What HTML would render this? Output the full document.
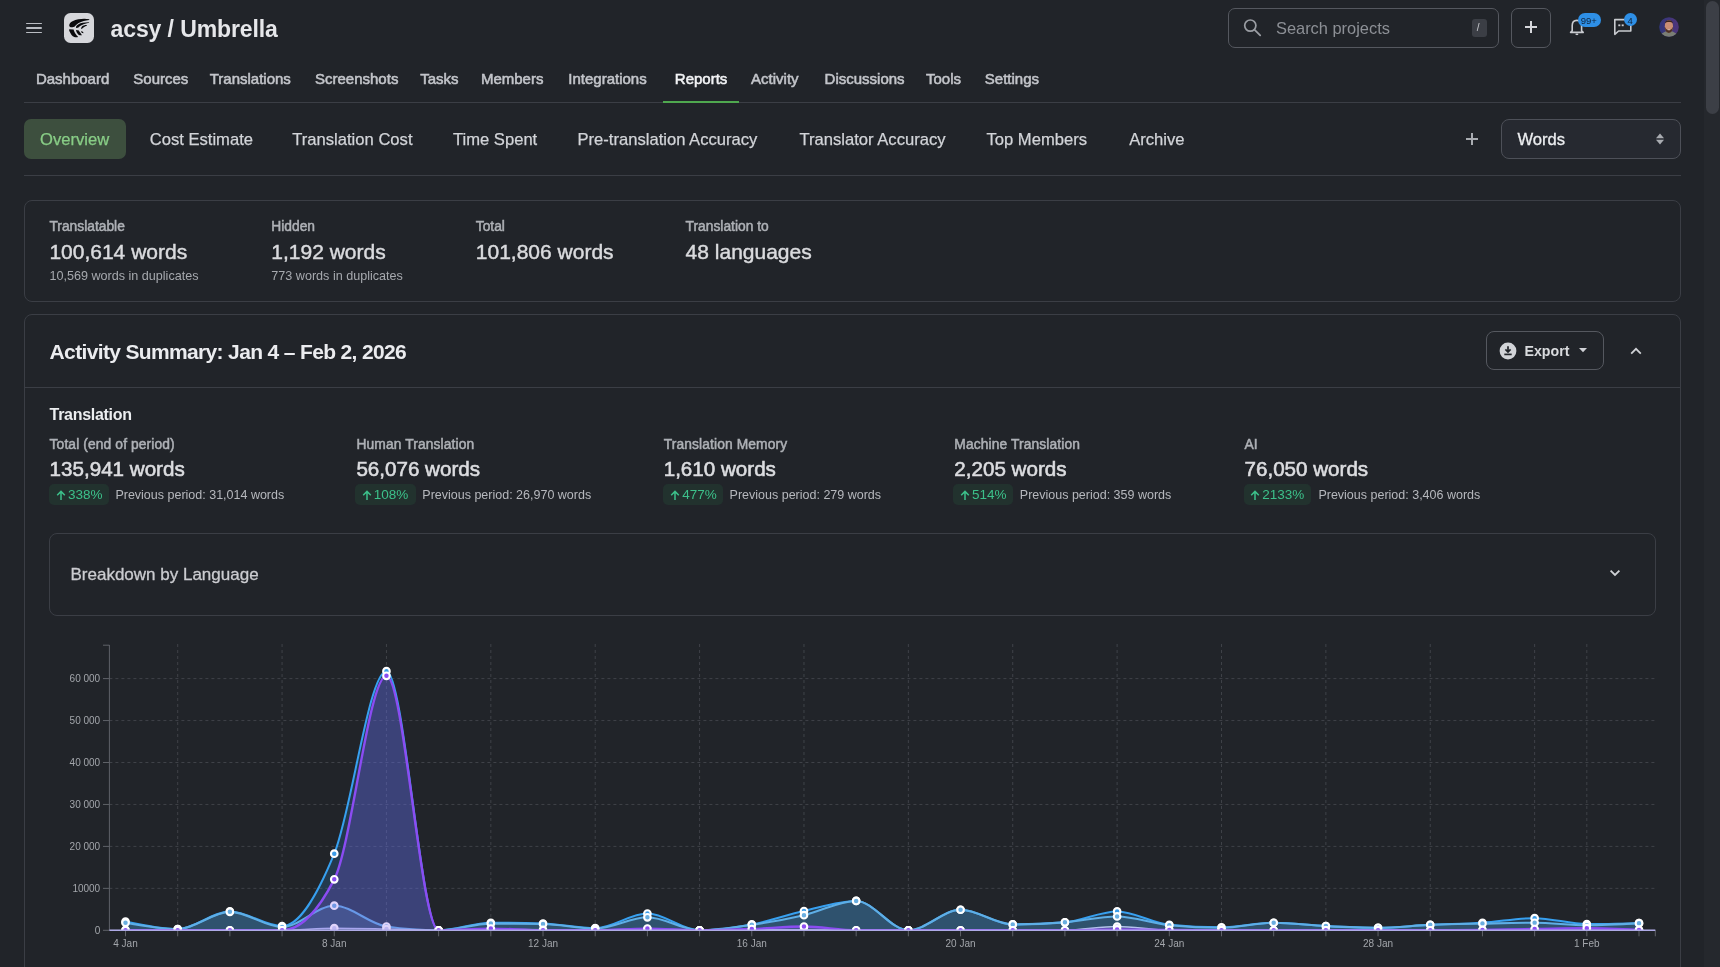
<!DOCTYPE html><html><head><meta charset="utf-8"><style>
html,body{margin:0;padding:0;width:1720px;height:967px;overflow:hidden;background:#212429;font-family:"Liberation Sans", sans-serif}
.t{position:absolute;white-space:nowrap;line-height:1}
.b{position:absolute}
</style></head><body><div id="root" style="position:absolute;left:0;top:0;width:1720px;height:967px;will-change:transform">
<div class="b" style="left:26px;top:22.5px;width:16px;height:1.8px;background:#b9bcc2;border-radius:1px"></div><div class="b" style="left:26px;top:27px;width:16px;height:1.8px;background:#b9bcc2;border-radius:1px"></div><div class="b" style="left:26px;top:31.5px;width:16px;height:1.8px;background:#b9bcc2;border-radius:1px"></div><div class="b" style="left:64px;top:13px;width:30px;height:30px;border-radius:6.5px;background:#d6d7db;overflow:hidden">
<svg width="30" height="30" viewBox="0 0 30 30" style="position:absolute;left:0;top:0"><g fill="#0b0b0d">
<path d="M25.4 6.3 C21 5.2 14 5.6 8.5 8.2 C6.6 9.2 5.2 10.8 5.2 12.4 C5.2 13.6 6.6 14.4 8.5 14.3 C10 14.2 11 13.6 11.4 12.8 C13 10.5 17 7.8 25.1 6.9 Z"/>
<path d="M25.1 9.3 C21 9.2 16.5 10 14.9 11 C13.5 11.8 12.4 12.8 12.1 13.6 L12.1 14.9 C13 15 14 14.8 14.5 14.5 C16 13 19 10.8 25.1 9.8 Z"/>
<path d="M23 12.1 C21 12 19 12.7 18 13.5 C17.4 14.2 17.1 15 17.2 15.9 L17.7 15.9 C18.5 15.3 19.2 14.6 19.8 14.2 C20.8 13.4 22 12.8 23 12.5 Z"/>
<path d="M5.2 16.3 L9.6 16.6 C10 18 10.8 20.5 12.8 22.6 C13.3 23.2 13.8 23.7 14.2 24 C12.5 24.3 11.4 24.3 10.3 24 C8.2 23.2 6.8 21.2 5.2 17.7 Z"/>
<path d="M12.1 17 L14.9 17.5 C15.3 18.4 15.7 19.2 16.3 19.8 C16.9 20.8 17.4 21.6 18 22.3 C16.8 22.4 15.8 22.3 14.9 21.9 C13.7 21 12.8 20 12.1 17.8 Z"/>
<path d="M17.2 18 C18 18.2 18.7 18.6 19.1 19.1 C19.3 19.5 19.4 19.9 19.4 20.2 C18.6 20.2 18 20 17.7 19.8 C17.4 19.3 17.2 18.6 17.2 18 Z"/>
</g></svg></div><div class="t" style="left:110.5px;top:18.3px;font-size:23px;color:#e6e7ea;font-weight:700;letter-spacing:-0.1px;">acsy / Umbrella</div><div class="b" style="left:1228px;top:8px;width:271px;height:40px;border:1px solid #55585f;border-radius:7px;box-sizing:border-box"></div><svg class="b" style="left:1243px;top:18px" width="20" height="20" viewBox="0 0 20 20"><circle cx="7.3" cy="7.6" r="5.6" stroke="#9a9da3" stroke-width="1.7" fill="none"/><path d="M11.4 11.7 L17.2 17.4" stroke="#9a9da3" stroke-width="1.8" stroke-linecap="round"/></svg><div class="t" style="left:1276.0px;top:20.3px;font-size:16.4px;color:#8d9096;font-weight:400;">Search projects</div><div class="b" style="left:1471.5px;top:19px;width:15.5px;height:18px;background:#3b3e45;border-radius:3px"></div><div class="t" style="left:1476.8px;top:23.3px;font-size:10px;color:#c8cace;font-weight:400;">/</div><div class="b" style="left:1511px;top:8px;width:40px;height:40px;border:1px solid #55585f;border-radius:7px;box-sizing:border-box"></div><div class="b" style="left:1524.8px;top:26.1px;width:12.4px;height:1.9px;background:#d6d7db"></div><div class="b" style="left:1530.1px;top:20.9px;width:1.9px;height:12.3px;background:#d6d7db"></div><svg class="b" style="left:1568px;top:16px" width="18" height="20" viewBox="0 0 18 20"><path d="M4.2 14.8 L4.2 9.6 C4.2 6.3 6.3 4.4 8.9 4.4 C11.5 4.4 13.6 6.3 13.6 9.6 L13.6 14.8 L15.2 16.4 L2.6 16.4 Z" stroke="#c9cbd0" stroke-width="1.6" fill="none" stroke-linejoin="round"/><path d="M7.6 18.3 L10.2 18.3" stroke="#c9cbd0" stroke-width="1.5"/></svg><div class="b" style="left:1577.5px;top:13px;width:23.5px;height:14.3px;background:#2e8fe6;border-radius:8px"></div><div class="t" style="left:1580.8px;top:16.0px;font-size:9.5px;color:#10243c;font-weight:400;">99+</div><svg class="b" style="left:1613px;top:17px" width="20" height="20" viewBox="0 0 20 20"><path d="M1.8 2.6 L17.8 2.6 L17.8 14.0 L5.6 14.0 L1.8 17.3 Z" stroke="#c9cbd0" stroke-width="1.6" fill="none" stroke-linejoin="round"/><rect x="5.3" y="7.4" width="2" height="1.8" fill="#c9cbd0"/><rect x="8.7" y="7.4" width="2" height="1.8" fill="#c9cbd0"/></svg><div class="b" style="left:1623.8px;top:12.7px;width:13.2px;height:13.3px;background:#2e8fe6;border-radius:50%"></div><div class="t" style="left:1627.6px;top:15.6px;font-size:9.5px;color:#10243c;font-weight:400;">4</div><svg class="b" style="left:1659px;top:17px" width="20" height="20" viewBox="0 0 20 20"><defs><clipPath id="av"><circle cx="10" cy="10" r="9.8"/></clipPath><linearGradient id="avg" x1="0" x2="1" y1="0" y2="0"><stop offset="0" stop-color="#30367a"/><stop offset="1" stop-color="#50357a"/></linearGradient></defs><g clip-path="url(#av)"><rect width="20" height="20" fill="url(#avg)"/><ellipse cx="10" cy="21.5" rx="9.5" ry="7.5" fill="#7a7e74"/><ellipse cx="9.9" cy="9.3" rx="4.1" ry="6.4" fill="#c98e74"/><path d="M5.9 9.8 C6 14.2 8 16 9.9 16 C11.8 16 13.8 14.2 13.9 9.8 C13 12.2 12 12.8 9.9 12.8 C7.8 12.8 6.8 12.2 5.9 9.8 Z" fill="#4d3024"/><path d="M8.2 12.3 L11.6 12.3 L11 13.2 L8.8 13.2 Z" fill="#e0c0b0"/><path d="M5.9 6.2 C5.9 2.3 13.9 2.3 13.9 6.2 C12.5 4.6 7.3 4.6 5.9 6.2 Z" fill="#3a241c"/></g></svg><div class="t" style="left:35.9px;top:71.0px;font-size:15px;color:#c3c5ca;font-weight:400;-webkit-text-stroke:0.55px #c3c5ca;">Dashboard</div><div class="t" style="left:133.3px;top:71.0px;font-size:15px;color:#c3c5ca;font-weight:400;-webkit-text-stroke:0.55px #c3c5ca;">Sources</div><div class="t" style="left:209.7px;top:71.0px;font-size:15px;color:#c3c5ca;font-weight:400;-webkit-text-stroke:0.55px #c3c5ca;">Translations</div><div class="t" style="left:315.0px;top:71.0px;font-size:15px;color:#c3c5ca;font-weight:400;-webkit-text-stroke:0.55px #c3c5ca;">Screenshots</div><div class="t" style="left:420.2px;top:71.0px;font-size:15px;color:#c3c5ca;font-weight:400;-webkit-text-stroke:0.55px #c3c5ca;">Tasks</div><div class="t" style="left:480.9px;top:71.0px;font-size:15px;color:#c3c5ca;font-weight:400;-webkit-text-stroke:0.55px #c3c5ca;">Members</div><div class="t" style="left:568.3px;top:71.0px;font-size:15px;color:#c3c5ca;font-weight:400;-webkit-text-stroke:0.55px #c3c5ca;">Integrations</div><div class="t" style="left:674.8px;top:71.0px;font-size:15px;color:#f2f3f5;font-weight:400;-webkit-text-stroke:0.55px #f2f3f5;">Reports</div><div class="t" style="left:751.1px;top:71.0px;font-size:15px;color:#c3c5ca;font-weight:400;-webkit-text-stroke:0.55px #c3c5ca;">Activity</div><div class="t" style="left:824.6px;top:71.0px;font-size:15px;color:#c3c5ca;font-weight:400;-webkit-text-stroke:0.55px #c3c5ca;">Discussions</div><div class="t" style="left:926.0px;top:71.0px;font-size:15px;color:#c3c5ca;font-weight:400;-webkit-text-stroke:0.55px #c3c5ca;">Tools</div><div class="t" style="left:984.8px;top:71.0px;font-size:15px;color:#c3c5ca;font-weight:400;-webkit-text-stroke:0.55px #c3c5ca;">Settings</div><div class="b" style="left:24px;top:102px;width:1657px;height:1px;background:#3b3e45"></div><div class="b" style="left:663.3px;top:101px;width:75.7px;height:2.2px;background:#4fa84f"></div><div class="b" style="left:24px;top:119px;width:102px;height:40px;background:#3d4f3e;border-radius:7px"></div><div class="t" style="left:40.1px;top:131.8px;font-size:16.6px;color:#88cd86;font-weight:400;-webkit-text-stroke:0.25px #88cd86;">Overview</div><div class="t" style="left:149.7px;top:131.8px;font-size:16.6px;color:#d2d4d8;font-weight:400;-webkit-text-stroke:0.25px #d2d4d8;">Cost Estimate</div><div class="t" style="left:292.3px;top:131.8px;font-size:16.6px;color:#d2d4d8;font-weight:400;-webkit-text-stroke:0.25px #d2d4d8;">Translation Cost</div><div class="t" style="left:453.0px;top:131.8px;font-size:16.6px;color:#d2d4d8;font-weight:400;-webkit-text-stroke:0.25px #d2d4d8;">Time Spent</div><div class="t" style="left:577.5px;top:131.8px;font-size:16.6px;color:#d2d4d8;font-weight:400;-webkit-text-stroke:0.25px #d2d4d8;">Pre-translation Accuracy</div><div class="t" style="left:799.5px;top:131.8px;font-size:16.6px;color:#d2d4d8;font-weight:400;-webkit-text-stroke:0.25px #d2d4d8;">Translator Accuracy</div><div class="t" style="left:986.5px;top:131.8px;font-size:16.6px;color:#d2d4d8;font-weight:400;-webkit-text-stroke:0.25px #d2d4d8;">Top Members</div><div class="t" style="left:1129.2px;top:131.8px;font-size:16.6px;color:#d2d4d8;font-weight:400;-webkit-text-stroke:0.25px #d2d4d8;">Archive</div><div class="b" style="left:1465.7px;top:138.1px;width:12.6px;height:1.7px;background:#a9acb1"></div><div class="b" style="left:1471.15px;top:133px;width:1.7px;height:12px;background:#a9acb1"></div><div class="b" style="left:1501px;top:119px;width:180px;height:40px;border:1px solid #4d5058;border-radius:8px;box-sizing:border-box;background:#262930"></div><div class="t" style="left:1517.5px;top:131.8px;font-size:16.6px;color:#eceef0;font-weight:400;-webkit-text-stroke:0.3px #eceef0;">Words</div><svg class="b" style="left:1655px;top:132px" width="10" height="14" viewBox="0 0 10 14"><path d="M1 6.2 L5 1.5 L9 6.2 Z" fill="#a9acb1"/><path d="M1 7.8 L5 12.5 L9 7.8 Z" fill="#a9acb1"/></svg><div class="b" style="left:24px;top:175px;width:1657px;height:1px;background:#3b3e45"></div><div class="b" style="left:24px;top:200px;width:1657px;height:102px;border:1px solid #3b3e45;border-radius:8px;box-sizing:border-box"></div><div class="t" style="left:49.4px;top:220.3px;font-size:13.8px;color:#aeb1b6;font-weight:400;-webkit-text-stroke:0.5px #aeb1b6;">Translatable</div><div class="t" style="left:49.4px;top:241.2px;font-size:21px;color:#dadbde;font-weight:400;-webkit-text-stroke:0.45px #dadbde;">100,614 words</div><div class="t" style="left:49.4px;top:270.3px;font-size:12.6px;color:#a6a9ae;font-weight:400;">10,569 words in duplicates</div><div class="t" style="left:271.3px;top:220.3px;font-size:13.8px;color:#aeb1b6;font-weight:400;-webkit-text-stroke:0.5px #aeb1b6;">Hidden</div><div class="t" style="left:271.3px;top:241.2px;font-size:21px;color:#dadbde;font-weight:400;-webkit-text-stroke:0.45px #dadbde;">1,192 words</div><div class="t" style="left:271.3px;top:270.3px;font-size:12.6px;color:#a6a9ae;font-weight:400;">773 words in duplicates</div><div class="t" style="left:475.8px;top:220.3px;font-size:13.8px;color:#aeb1b6;font-weight:400;-webkit-text-stroke:0.5px #aeb1b6;">Total</div><div class="t" style="left:475.8px;top:241.2px;font-size:21px;color:#dadbde;font-weight:400;-webkit-text-stroke:0.45px #dadbde;">101,806 words</div><div class="t" style="left:685.6px;top:220.3px;font-size:13.8px;color:#aeb1b6;font-weight:400;-webkit-text-stroke:0.5px #aeb1b6;">Translation to</div><div class="t" style="left:685.6px;top:241.2px;font-size:21px;color:#dadbde;font-weight:400;-webkit-text-stroke:0.45px #dadbde;">48 languages</div><div class="b" style="left:24px;top:314px;width:1657px;height:700px;border:1px solid #3b3e45;border-radius:8px;box-sizing:border-box"></div><div class="t" style="left:49.6px;top:340.6px;font-size:21px;color:#ebecef;font-weight:700;letter-spacing:-0.65px;">Activity Summary: Jan 4 – Feb 2, 2026</div><div class="b" style="left:1486px;top:331px;width:118px;height:39px;border:1px solid #55585f;border-radius:8px;box-sizing:border-box"></div><svg class="b" style="left:1499px;top:342px" width="18" height="18" viewBox="0 0 18 18"><circle cx="9" cy="9" r="8.4" fill="#d2d4d8"/><path d="M9 4.2 L9 9.8 M6.4 7.4 L9 10 L11.6 7.4" stroke="#212429" stroke-width="1.7" fill="none"/><path d="M5.3 12.4 L12.7 12.4" stroke="#212429" stroke-width="1.7"/></svg><div class="t" style="left:1524.5px;top:343.8px;font-size:14.2px;color:#d9dbde;font-weight:700;">Export</div><svg class="b" style="left:1578px;top:347px" width="10" height="6" viewBox="0 0 10 6"><path d="M1 1 L9 1 L5 5.2 Z" fill="#d0d2d6"/></svg><svg class="b" style="left:1629px;top:346px" width="14" height="10" viewBox="0 0 14 10"><path d="M2.2 7.6 L7 2.8 L11.8 7.6" stroke="#d0d2d6" stroke-width="1.8" fill="none"/></svg><div class="b" style="left:24px;top:387px;width:1657px;height:1px;background:#3b3e45"></div><div class="t" style="left:49.6px;top:406.6px;font-size:16px;color:#eceef0;font-weight:700;letter-spacing:-0.3px;">Translation</div><div class="t" style="left:49.6px;top:437.7px;font-size:13.8px;color:#aeb1b6;font-weight:400;letter-spacing:0.12px;-webkit-text-stroke:0.5px #aeb1b6;">Total (end of period)</div><div class="t" style="left:49.6px;top:458.5px;font-size:20.6px;color:#dcdde0;font-weight:400;-webkit-text-stroke:0.6px #dcdde0;">135,941 words</div><div class="b" style="left:49.1px;top:484.3px;width:59.800000000000004px;height:20.5px;background:#22322e;border-radius:5px"></div><svg class="b" style="left:55.6px;top:490px" width="10" height="11" viewBox="0 0 10 11"><path d="M5 10 L5 1.6 M1.2 5.2 L5 1.4 L8.8 5.2" stroke="#3cc08a" stroke-width="1.5" fill="none"/></svg><div class="t" style="left:67.9px;top:488.4px;font-size:13.5px;color:#3cc08a;font-weight:400;">338%</div><div class="t" style="left:115.4px;top:489.2px;font-size:12.5px;color:#b6b8bd;font-weight:400;">Previous period: 31,014 words</div><div class="t" style="left:356.4px;top:437.7px;font-size:13.8px;color:#aeb1b6;font-weight:400;letter-spacing:0.12px;-webkit-text-stroke:0.5px #aeb1b6;">Human Translation</div><div class="t" style="left:356.4px;top:458.5px;font-size:20.6px;color:#dcdde0;font-weight:400;-webkit-text-stroke:0.6px #dcdde0;">56,076 words</div><div class="b" style="left:355px;top:484.3px;width:60.69999999999999px;height:20.5px;background:#22322e;border-radius:5px"></div><svg class="b" style="left:361.5px;top:490px" width="10" height="11" viewBox="0 0 10 11"><path d="M5 10 L5 1.6 M1.2 5.2 L5 1.4 L8.8 5.2" stroke="#3cc08a" stroke-width="1.5" fill="none"/></svg><div class="t" style="left:373.8px;top:488.4px;font-size:13.5px;color:#3cc08a;font-weight:400;">108%</div><div class="t" style="left:422.3px;top:489.2px;font-size:12.5px;color:#b6b8bd;font-weight:400;">Previous period: 26,970 words</div><div class="t" style="left:663.7px;top:437.7px;font-size:13.8px;color:#aeb1b6;font-weight:400;letter-spacing:0.12px;-webkit-text-stroke:0.5px #aeb1b6;">Translation Memory</div><div class="t" style="left:663.7px;top:458.5px;font-size:20.6px;color:#dcdde0;font-weight:400;-webkit-text-stroke:0.6px #dcdde0;">1,610 words</div><div class="b" style="left:663.4px;top:484.3px;width:59.60000000000002px;height:20.5px;background:#22322e;border-radius:5px"></div><svg class="b" style="left:669.9px;top:490px" width="10" height="11" viewBox="0 0 10 11"><path d="M5 10 L5 1.6 M1.2 5.2 L5 1.4 L8.8 5.2" stroke="#3cc08a" stroke-width="1.5" fill="none"/></svg><div class="t" style="left:682.2px;top:488.4px;font-size:13.5px;color:#3cc08a;font-weight:400;">477%</div><div class="t" style="left:729.6px;top:489.2px;font-size:12.5px;color:#b6b8bd;font-weight:400;">Previous period: 279 words</div><div class="t" style="left:954.3px;top:437.7px;font-size:13.8px;color:#aeb1b6;font-weight:400;letter-spacing:0.12px;-webkit-text-stroke:0.5px #aeb1b6;">Machine Translation</div><div class="t" style="left:954.3px;top:458.5px;font-size:20.6px;color:#dcdde0;font-weight:400;-webkit-text-stroke:0.6px #dcdde0;">2,205 words</div><div class="b" style="left:953.3px;top:484.3px;width:60.0px;height:20.5px;background:#22322e;border-radius:5px"></div><svg class="b" style="left:959.8px;top:490px" width="10" height="11" viewBox="0 0 10 11"><path d="M5 10 L5 1.6 M1.2 5.2 L5 1.4 L8.8 5.2" stroke="#3cc08a" stroke-width="1.5" fill="none"/></svg><div class="t" style="left:972.1px;top:488.4px;font-size:13.5px;color:#3cc08a;font-weight:400;">514%</div><div class="t" style="left:1019.8px;top:489.2px;font-size:12.5px;color:#b6b8bd;font-weight:400;">Previous period: 359 words</div><div class="t" style="left:1244.5px;top:437.7px;font-size:13.8px;color:#aeb1b6;font-weight:400;letter-spacing:0.12px;-webkit-text-stroke:0.5px #aeb1b6;">AI</div><div class="t" style="left:1244.5px;top:458.5px;font-size:20.6px;color:#dcdde0;font-weight:400;-webkit-text-stroke:0.6px #dcdde0;">76,050 words</div><div class="b" style="left:1243.5px;top:484.3px;width:67.70000000000005px;height:20.5px;background:#22322e;border-radius:5px"></div><svg class="b" style="left:1250.0px;top:490px" width="10" height="11" viewBox="0 0 10 11"><path d="M5 10 L5 1.6 M1.2 5.2 L5 1.4 L8.8 5.2" stroke="#3cc08a" stroke-width="1.5" fill="none"/></svg><div class="t" style="left:1262.3px;top:488.4px;font-size:13.5px;color:#3cc08a;font-weight:400;">2133%</div><div class="t" style="left:1318.4px;top:489.2px;font-size:12.5px;color:#b6b8bd;font-weight:400;">Previous period: 3,406 words</div><div class="b" style="left:49px;top:533px;width:1607px;height:83px;border:1px solid #3b3e45;border-radius:8px;box-sizing:border-box"></div><div class="t" style="left:70.5px;top:565.8px;font-size:17px;color:#cbccd0;font-weight:400;-webkit-text-stroke:0.3px #cbccd0;">Breakdown by Language</div><svg class="b" style="left:1608px;top:567px" width="14" height="12" viewBox="0 0 14 12"><path d="M2.6 3.6 L7 8 L11.4 3.6" stroke="#d0d2d6" stroke-width="1.8" fill="none"/></svg><div class="b" style="left:1704px;top:0px;width:16px;height:967px;background:#25282d"></div><div class="b" style="left:1706px;top:1px;width:12.8px;height:113px;background:#3c3f46;border-radius:7px"></div>
<svg class="b" style="left:0;top:620px" width="1700" height="347" viewBox="0 620 1700 347">
<line x1="109.4" y1="888.35" x2="1655.3" y2="888.35" stroke="#3f4248" stroke-width="1" stroke-dasharray="3 3"/>
<line x1="109.4" y1="846.40" x2="1655.3" y2="846.40" stroke="#3f4248" stroke-width="1" stroke-dasharray="3 3"/>
<line x1="109.4" y1="804.45" x2="1655.3" y2="804.45" stroke="#3f4248" stroke-width="1" stroke-dasharray="3 3"/>
<line x1="109.4" y1="762.50" x2="1655.3" y2="762.50" stroke="#3f4248" stroke-width="1" stroke-dasharray="3 3"/>
<line x1="109.4" y1="720.55" x2="1655.3" y2="720.55" stroke="#3f4248" stroke-width="1" stroke-dasharray="3 3"/>
<line x1="109.4" y1="678.60" x2="1655.3" y2="678.60" stroke="#3f4248" stroke-width="1" stroke-dasharray="3 3"/>
<line x1="177.69" y1="644" x2="177.69" y2="930.30" stroke="#3f4248" stroke-width="1" stroke-dasharray="3 3"/>
<line x1="282.07" y1="644" x2="282.07" y2="930.30" stroke="#3f4248" stroke-width="1" stroke-dasharray="3 3"/>
<line x1="386.45" y1="644" x2="386.45" y2="930.30" stroke="#3f4248" stroke-width="1" stroke-dasharray="3 3"/>
<line x1="490.83" y1="644" x2="490.83" y2="930.30" stroke="#3f4248" stroke-width="1" stroke-dasharray="3 3"/>
<line x1="595.21" y1="644" x2="595.21" y2="930.30" stroke="#3f4248" stroke-width="1" stroke-dasharray="3 3"/>
<line x1="699.59" y1="644" x2="699.59" y2="930.30" stroke="#3f4248" stroke-width="1" stroke-dasharray="3 3"/>
<line x1="803.97" y1="644" x2="803.97" y2="930.30" stroke="#3f4248" stroke-width="1" stroke-dasharray="3 3"/>
<line x1="908.35" y1="644" x2="908.35" y2="930.30" stroke="#3f4248" stroke-width="1" stroke-dasharray="3 3"/>
<line x1="1012.73" y1="644" x2="1012.73" y2="930.30" stroke="#3f4248" stroke-width="1" stroke-dasharray="3 3"/>
<line x1="1117.11" y1="644" x2="1117.11" y2="930.30" stroke="#3f4248" stroke-width="1" stroke-dasharray="3 3"/>
<line x1="1221.49" y1="644" x2="1221.49" y2="930.30" stroke="#3f4248" stroke-width="1" stroke-dasharray="3 3"/>
<line x1="1325.87" y1="644" x2="1325.87" y2="930.30" stroke="#3f4248" stroke-width="1" stroke-dasharray="3 3"/>
<line x1="1430.25" y1="644" x2="1430.25" y2="930.30" stroke="#3f4248" stroke-width="1" stroke-dasharray="3 3"/>
<line x1="1534.63" y1="644" x2="1534.63" y2="930.30" stroke="#3f4248" stroke-width="1" stroke-dasharray="3 3"/>
<line x1="1586.82" y1="644" x2="1586.82" y2="930.30" stroke="#3f4248" stroke-width="1" stroke-dasharray="3 3"/>
<line x1="109.4" y1="645" x2="109.4" y2="930.30" stroke="#5f6268" stroke-width="1"/>
<line x1="103" y1="645.2" x2="109.4" y2="645.2" stroke="#5f6268" stroke-width="1"/>
<line x1="103" y1="930.30" x2="109.4" y2="930.30" stroke="#5f6268" stroke-width="1"/>
<text x="100.2" y="933.90" text-anchor="end" font-size="10" fill="#a3a6ab" font-family="Liberation Sans">0</text>
<line x1="103" y1="888.35" x2="109.4" y2="888.35" stroke="#5f6268" stroke-width="1"/>
<text x="100.2" y="891.95" text-anchor="end" font-size="10" fill="#a3a6ab" font-family="Liberation Sans">10000</text>
<line x1="103" y1="846.40" x2="109.4" y2="846.40" stroke="#5f6268" stroke-width="1"/>
<text x="100.2" y="850.00" text-anchor="end" font-size="10" fill="#a3a6ab" font-family="Liberation Sans">20 000</text>
<line x1="103" y1="804.45" x2="109.4" y2="804.45" stroke="#5f6268" stroke-width="1"/>
<text x="100.2" y="808.05" text-anchor="end" font-size="10" fill="#a3a6ab" font-family="Liberation Sans">30 000</text>
<line x1="103" y1="762.50" x2="109.4" y2="762.50" stroke="#5f6268" stroke-width="1"/>
<text x="100.2" y="766.10" text-anchor="end" font-size="10" fill="#a3a6ab" font-family="Liberation Sans">40 000</text>
<line x1="103" y1="720.55" x2="109.4" y2="720.55" stroke="#5f6268" stroke-width="1"/>
<text x="100.2" y="724.15" text-anchor="end" font-size="10" fill="#a3a6ab" font-family="Liberation Sans">50 000</text>
<line x1="103" y1="678.60" x2="109.4" y2="678.60" stroke="#5f6268" stroke-width="1"/>
<text x="100.2" y="682.20" text-anchor="end" font-size="10" fill="#a3a6ab" font-family="Liberation Sans">60 000</text>
<line x1="109.4" y1="930.30" x2="1655.3" y2="930.30" stroke="#5f6268" stroke-width="1"/>
<line x1="125.50" y1="930.30" x2="125.50" y2="936.30" stroke="#5f6268" stroke-width="1"/>
<line x1="177.69" y1="930.30" x2="177.69" y2="936.30" stroke="#5f6268" stroke-width="1"/>
<line x1="229.88" y1="930.30" x2="229.88" y2="936.30" stroke="#5f6268" stroke-width="1"/>
<line x1="282.07" y1="930.30" x2="282.07" y2="936.30" stroke="#5f6268" stroke-width="1"/>
<line x1="334.26" y1="930.30" x2="334.26" y2="936.30" stroke="#5f6268" stroke-width="1"/>
<line x1="386.45" y1="930.30" x2="386.45" y2="936.30" stroke="#5f6268" stroke-width="1"/>
<line x1="438.64" y1="930.30" x2="438.64" y2="936.30" stroke="#5f6268" stroke-width="1"/>
<line x1="490.83" y1="930.30" x2="490.83" y2="936.30" stroke="#5f6268" stroke-width="1"/>
<line x1="543.02" y1="930.30" x2="543.02" y2="936.30" stroke="#5f6268" stroke-width="1"/>
<line x1="595.21" y1="930.30" x2="595.21" y2="936.30" stroke="#5f6268" stroke-width="1"/>
<line x1="647.40" y1="930.30" x2="647.40" y2="936.30" stroke="#5f6268" stroke-width="1"/>
<line x1="699.59" y1="930.30" x2="699.59" y2="936.30" stroke="#5f6268" stroke-width="1"/>
<line x1="751.78" y1="930.30" x2="751.78" y2="936.30" stroke="#5f6268" stroke-width="1"/>
<line x1="803.97" y1="930.30" x2="803.97" y2="936.30" stroke="#5f6268" stroke-width="1"/>
<line x1="856.16" y1="930.30" x2="856.16" y2="936.30" stroke="#5f6268" stroke-width="1"/>
<line x1="908.35" y1="930.30" x2="908.35" y2="936.30" stroke="#5f6268" stroke-width="1"/>
<line x1="960.54" y1="930.30" x2="960.54" y2="936.30" stroke="#5f6268" stroke-width="1"/>
<line x1="1012.73" y1="930.30" x2="1012.73" y2="936.30" stroke="#5f6268" stroke-width="1"/>
<line x1="1064.92" y1="930.30" x2="1064.92" y2="936.30" stroke="#5f6268" stroke-width="1"/>
<line x1="1117.11" y1="930.30" x2="1117.11" y2="936.30" stroke="#5f6268" stroke-width="1"/>
<line x1="1169.30" y1="930.30" x2="1169.30" y2="936.30" stroke="#5f6268" stroke-width="1"/>
<line x1="1221.49" y1="930.30" x2="1221.49" y2="936.30" stroke="#5f6268" stroke-width="1"/>
<line x1="1273.68" y1="930.30" x2="1273.68" y2="936.30" stroke="#5f6268" stroke-width="1"/>
<line x1="1325.87" y1="930.30" x2="1325.87" y2="936.30" stroke="#5f6268" stroke-width="1"/>
<line x1="1378.06" y1="930.30" x2="1378.06" y2="936.30" stroke="#5f6268" stroke-width="1"/>
<line x1="1430.25" y1="930.30" x2="1430.25" y2="936.30" stroke="#5f6268" stroke-width="1"/>
<line x1="1482.44" y1="930.30" x2="1482.44" y2="936.30" stroke="#5f6268" stroke-width="1"/>
<line x1="1534.63" y1="930.30" x2="1534.63" y2="936.30" stroke="#5f6268" stroke-width="1"/>
<line x1="1586.82" y1="930.30" x2="1586.82" y2="936.30" stroke="#5f6268" stroke-width="1"/>
<line x1="1639.01" y1="930.30" x2="1639.01" y2="936.30" stroke="#5f6268" stroke-width="1"/>
<line x1="1655.3" y1="930.30" x2="1655.3" y2="936.30" stroke="#5f6268" stroke-width="1"/>
<text x="125.50" y="947" text-anchor="middle" font-size="10" fill="#a3a6ab" font-family="Liberation Sans">4 Jan</text>
<text x="334.26" y="947" text-anchor="middle" font-size="10" fill="#a3a6ab" font-family="Liberation Sans">8 Jan</text>
<text x="543.02" y="947" text-anchor="middle" font-size="10" fill="#a3a6ab" font-family="Liberation Sans">12 Jan</text>
<text x="751.78" y="947" text-anchor="middle" font-size="10" fill="#a3a6ab" font-family="Liberation Sans">16 Jan</text>
<text x="960.54" y="947" text-anchor="middle" font-size="10" fill="#a3a6ab" font-family="Liberation Sans">20 Jan</text>
<text x="1169.30" y="947" text-anchor="middle" font-size="10" fill="#a3a6ab" font-family="Liberation Sans">24 Jan</text>
<text x="1378.06" y="947" text-anchor="middle" font-size="10" fill="#a3a6ab" font-family="Liberation Sans">28 Jan</text>
<text x="1586.82" y="947" text-anchor="middle" font-size="10" fill="#a3a6ab" font-family="Liberation Sans">1 Feb</text>
<defs><clipPath id="plot"><rect x="105" y="630" width="1555" height="300.9"/></clipPath></defs><g clip-path="url(#plot)">
<path d="M125.50,921.49 C142.90,925.27 160.29,929.04 177.69,929.04 C195.09,929.04 212.48,911.42 229.88,911.42 C247.28,911.42 264.67,926.10 282.07,926.10 C299.47,926.10 316.86,896.15 334.26,853.66 C351.66,811.16 369.05,671.13 386.45,671.13 C403.85,671.13 421.24,930.30 438.64,930.30 C456.04,930.30 473.43,922.75 490.83,922.75 C508.23,922.75 525.62,923.03 543.02,923.59 C560.42,924.15 577.81,928.20 595.21,928.20 C612.61,928.20 630.00,913.52 647.40,913.52 C664.80,913.52 682.19,930.30 699.59,930.30 C716.99,930.30 734.38,927.64 751.78,924.43 C769.18,921.21 786.57,914.92 803.97,911.00 C821.37,907.09 838.76,900.93 856.16,900.93 C873.56,900.93 890.95,930.30 908.35,930.30 C925.75,930.30 943.14,909.74 960.54,909.74 C977.94,909.74 995.33,924.43 1012.73,924.43 C1030.13,924.43 1047.52,923.73 1064.92,922.33 C1082.32,920.93 1099.71,911.42 1117.11,911.42 C1134.51,911.42 1151.90,923.17 1169.30,924.85 C1186.70,926.52 1204.09,927.36 1221.49,927.36 C1238.89,927.36 1256.28,922.75 1273.68,922.75 C1291.08,922.75 1308.47,925.27 1325.87,926.10 C1343.27,926.94 1360.66,927.78 1378.06,927.78 C1395.46,927.78 1412.85,925.69 1430.25,924.85 C1447.65,924.01 1465.04,923.87 1482.44,922.75 C1499.84,921.63 1517.23,918.13 1534.63,918.13 C1552.03,918.13 1569.42,924.01 1586.82,924.01 C1604.22,924.01 1621.61,923.59 1639.01,923.17 L1639.01,930.30 L125.50,930.30 Z" fill="rgba(47,150,232,0.20)"/>
<path d="M125.50,921.49 C142.90,925.27 160.29,929.04 177.69,929.04 C195.09,929.04 212.48,911.42 229.88,911.42 C247.28,911.42 264.67,926.10 282.07,926.10 C299.47,926.10 316.86,896.15 334.26,853.66 C351.66,811.16 369.05,671.13 386.45,671.13 C403.85,671.13 421.24,930.30 438.64,930.30 C456.04,930.30 473.43,922.75 490.83,922.75 C508.23,922.75 525.62,923.03 543.02,923.59 C560.42,924.15 577.81,928.20 595.21,928.20 C612.61,928.20 630.00,913.52 647.40,913.52 C664.80,913.52 682.19,930.30 699.59,930.30 C716.99,930.30 734.38,927.64 751.78,924.43 C769.18,921.21 786.57,914.92 803.97,911.00 C821.37,907.09 838.76,900.93 856.16,900.93 C873.56,900.93 890.95,930.30 908.35,930.30 C925.75,930.30 943.14,909.74 960.54,909.74 C977.94,909.74 995.33,924.43 1012.73,924.43 C1030.13,924.43 1047.52,923.73 1064.92,922.33 C1082.32,920.93 1099.71,911.42 1117.11,911.42 C1134.51,911.42 1151.90,923.17 1169.30,924.85 C1186.70,926.52 1204.09,927.36 1221.49,927.36 C1238.89,927.36 1256.28,922.75 1273.68,922.75 C1291.08,922.75 1308.47,925.27 1325.87,926.10 C1343.27,926.94 1360.66,927.78 1378.06,927.78 C1395.46,927.78 1412.85,925.69 1430.25,924.85 C1447.65,924.01 1465.04,923.87 1482.44,922.75 C1499.84,921.63 1517.23,918.13 1534.63,918.13 C1552.03,918.13 1569.42,924.01 1586.82,924.01 C1604.22,924.01 1621.61,923.59 1639.01,923.17" fill="none" stroke="#37a0f0" stroke-width="2.0"/>
<circle cx="125.50" cy="921.49" r="3.3" fill="#3b9ce8" stroke="#ffffff" stroke-width="2.1"/>
<circle cx="177.69" cy="929.04" r="3.3" fill="#3b9ce8" stroke="#ffffff" stroke-width="2.1"/>
<circle cx="229.88" cy="911.42" r="3.3" fill="#3b9ce8" stroke="#ffffff" stroke-width="2.1"/>
<circle cx="282.07" cy="926.10" r="3.3" fill="#3b9ce8" stroke="#ffffff" stroke-width="2.1"/>
<circle cx="334.26" cy="853.66" r="3.3" fill="#3b9ce8" stroke="#ffffff" stroke-width="2.1"/>
<circle cx="386.45" cy="671.13" r="3.3" fill="#3b9ce8" stroke="#ffffff" stroke-width="2.1"/>
<circle cx="438.64" cy="930.30" r="3.3" fill="#3b9ce8" stroke="#ffffff" stroke-width="2.1"/>
<circle cx="490.83" cy="922.75" r="3.3" fill="#3b9ce8" stroke="#ffffff" stroke-width="2.1"/>
<circle cx="543.02" cy="923.59" r="3.3" fill="#3b9ce8" stroke="#ffffff" stroke-width="2.1"/>
<circle cx="595.21" cy="928.20" r="3.3" fill="#3b9ce8" stroke="#ffffff" stroke-width="2.1"/>
<circle cx="647.40" cy="913.52" r="3.3" fill="#3b9ce8" stroke="#ffffff" stroke-width="2.1"/>
<circle cx="699.59" cy="930.30" r="3.3" fill="#3b9ce8" stroke="#ffffff" stroke-width="2.1"/>
<circle cx="751.78" cy="924.43" r="3.3" fill="#3b9ce8" stroke="#ffffff" stroke-width="2.1"/>
<circle cx="803.97" cy="911.00" r="3.3" fill="#3b9ce8" stroke="#ffffff" stroke-width="2.1"/>
<circle cx="856.16" cy="900.93" r="3.3" fill="#3b9ce8" stroke="#ffffff" stroke-width="2.1"/>
<circle cx="908.35" cy="930.30" r="3.3" fill="#3b9ce8" stroke="#ffffff" stroke-width="2.1"/>
<circle cx="960.54" cy="909.74" r="3.3" fill="#3b9ce8" stroke="#ffffff" stroke-width="2.1"/>
<circle cx="1012.73" cy="924.43" r="3.3" fill="#3b9ce8" stroke="#ffffff" stroke-width="2.1"/>
<circle cx="1064.92" cy="922.33" r="3.3" fill="#3b9ce8" stroke="#ffffff" stroke-width="2.1"/>
<circle cx="1117.11" cy="911.42" r="3.3" fill="#3b9ce8" stroke="#ffffff" stroke-width="2.1"/>
<circle cx="1169.30" cy="924.85" r="3.3" fill="#3b9ce8" stroke="#ffffff" stroke-width="2.1"/>
<circle cx="1221.49" cy="927.36" r="3.3" fill="#3b9ce8" stroke="#ffffff" stroke-width="2.1"/>
<circle cx="1273.68" cy="922.75" r="3.3" fill="#3b9ce8" stroke="#ffffff" stroke-width="2.1"/>
<circle cx="1325.87" cy="926.10" r="3.3" fill="#3b9ce8" stroke="#ffffff" stroke-width="2.1"/>
<circle cx="1378.06" cy="927.78" r="3.3" fill="#3b9ce8" stroke="#ffffff" stroke-width="2.1"/>
<circle cx="1430.25" cy="924.85" r="3.3" fill="#3b9ce8" stroke="#ffffff" stroke-width="2.1"/>
<circle cx="1482.44" cy="922.75" r="3.3" fill="#3b9ce8" stroke="#ffffff" stroke-width="2.1"/>
<circle cx="1534.63" cy="918.13" r="3.3" fill="#3b9ce8" stroke="#ffffff" stroke-width="2.1"/>
<circle cx="1586.82" cy="924.01" r="3.3" fill="#3b9ce8" stroke="#ffffff" stroke-width="2.1"/>
<circle cx="1639.01" cy="923.17" r="3.3" fill="#3b9ce8" stroke="#ffffff" stroke-width="2.1"/>
<path d="M125.50,922.75 C142.90,925.90 160.29,929.04 177.69,929.04 C195.09,929.04 212.48,911.84 229.88,911.84 C247.28,911.84 264.67,926.94 282.07,926.94 C299.47,926.94 316.86,905.68 334.26,905.68 C351.66,905.68 369.05,924.01 386.45,926.52 C403.85,929.04 421.24,930.30 438.64,930.30 C456.04,930.30 473.43,923.59 490.83,923.59 C508.23,923.59 525.62,923.73 543.02,924.01 C560.42,924.29 577.81,928.62 595.21,928.62 C612.61,928.62 630.00,917.30 647.40,917.30 C664.80,917.30 682.19,930.30 699.59,930.30 C716.99,930.30 734.38,927.36 751.78,924.85 C769.18,922.33 786.57,919.18 803.97,915.20 C821.37,911.21 838.76,900.93 856.16,900.93 C873.56,900.93 890.95,930.30 908.35,930.30 C925.75,930.30 943.14,909.74 960.54,909.74 C977.94,909.74 995.33,924.43 1012.73,924.43 C1030.13,924.43 1047.52,923.66 1064.92,922.33 C1082.32,921.00 1099.71,916.46 1117.11,916.46 C1134.51,916.46 1151.90,923.59 1169.30,925.27 C1186.70,926.94 1204.09,927.78 1221.49,927.78 C1238.89,927.78 1256.28,922.75 1273.68,922.75 C1291.08,922.75 1308.47,925.27 1325.87,926.10 C1343.27,926.94 1360.66,927.78 1378.06,927.78 C1395.46,927.78 1412.85,925.55 1430.25,924.85 C1447.65,924.15 1465.04,923.94 1482.44,923.59 C1499.84,923.24 1517.23,922.75 1534.63,922.75 C1552.03,922.75 1569.42,925.27 1586.82,925.27 C1604.22,925.27 1621.61,924.22 1639.01,923.17 L1639.01,930.30 L125.50,930.30 Z" fill="rgba(94,174,230,0.21)"/>
<path d="M125.50,922.75 C142.90,925.90 160.29,929.04 177.69,929.04 C195.09,929.04 212.48,911.84 229.88,911.84 C247.28,911.84 264.67,926.94 282.07,926.94 C299.47,926.94 316.86,905.68 334.26,905.68 C351.66,905.68 369.05,924.01 386.45,926.52 C403.85,929.04 421.24,930.30 438.64,930.30 C456.04,930.30 473.43,923.59 490.83,923.59 C508.23,923.59 525.62,923.73 543.02,924.01 C560.42,924.29 577.81,928.62 595.21,928.62 C612.61,928.62 630.00,917.30 647.40,917.30 C664.80,917.30 682.19,930.30 699.59,930.30 C716.99,930.30 734.38,927.36 751.78,924.85 C769.18,922.33 786.57,919.18 803.97,915.20 C821.37,911.21 838.76,900.93 856.16,900.93 C873.56,900.93 890.95,930.30 908.35,930.30 C925.75,930.30 943.14,909.74 960.54,909.74 C977.94,909.74 995.33,924.43 1012.73,924.43 C1030.13,924.43 1047.52,923.66 1064.92,922.33 C1082.32,921.00 1099.71,916.46 1117.11,916.46 C1134.51,916.46 1151.90,923.59 1169.30,925.27 C1186.70,926.94 1204.09,927.78 1221.49,927.78 C1238.89,927.78 1256.28,922.75 1273.68,922.75 C1291.08,922.75 1308.47,925.27 1325.87,926.10 C1343.27,926.94 1360.66,927.78 1378.06,927.78 C1395.46,927.78 1412.85,925.55 1430.25,924.85 C1447.65,924.15 1465.04,923.94 1482.44,923.59 C1499.84,923.24 1517.23,922.75 1534.63,922.75 C1552.03,922.75 1569.42,925.27 1586.82,925.27 C1604.22,925.27 1621.61,924.22 1639.01,923.17" fill="none" stroke="#5eaee6" stroke-width="2.1"/>
<circle cx="125.50" cy="922.75" r="3.3" fill="#6aaee0" stroke="#ffffff" stroke-width="2.1"/>
<circle cx="177.69" cy="929.04" r="3.3" fill="#6aaee0" stroke="#ffffff" stroke-width="2.1"/>
<circle cx="229.88" cy="911.84" r="3.3" fill="#6aaee0" stroke="#ffffff" stroke-width="2.1"/>
<circle cx="282.07" cy="926.94" r="3.3" fill="#6aaee0" stroke="#ffffff" stroke-width="2.1"/>
<circle cx="334.26" cy="905.68" r="3.3" fill="#6aaee0" stroke="#ffffff" stroke-width="2.1"/>
<circle cx="386.45" cy="926.52" r="3.3" fill="#6aaee0" stroke="#ffffff" stroke-width="2.1"/>
<circle cx="438.64" cy="930.30" r="3.3" fill="#6aaee0" stroke="#ffffff" stroke-width="2.1"/>
<circle cx="490.83" cy="923.59" r="3.3" fill="#6aaee0" stroke="#ffffff" stroke-width="2.1"/>
<circle cx="543.02" cy="924.01" r="3.3" fill="#6aaee0" stroke="#ffffff" stroke-width="2.1"/>
<circle cx="595.21" cy="928.62" r="3.3" fill="#6aaee0" stroke="#ffffff" stroke-width="2.1"/>
<circle cx="647.40" cy="917.30" r="3.3" fill="#6aaee0" stroke="#ffffff" stroke-width="2.1"/>
<circle cx="699.59" cy="930.30" r="3.3" fill="#6aaee0" stroke="#ffffff" stroke-width="2.1"/>
<circle cx="751.78" cy="924.85" r="3.3" fill="#6aaee0" stroke="#ffffff" stroke-width="2.1"/>
<circle cx="803.97" cy="915.20" r="3.3" fill="#6aaee0" stroke="#ffffff" stroke-width="2.1"/>
<circle cx="856.16" cy="900.93" r="3.3" fill="#6aaee0" stroke="#ffffff" stroke-width="2.1"/>
<circle cx="908.35" cy="930.30" r="3.3" fill="#6aaee0" stroke="#ffffff" stroke-width="2.1"/>
<circle cx="960.54" cy="909.74" r="3.3" fill="#6aaee0" stroke="#ffffff" stroke-width="2.1"/>
<circle cx="1012.73" cy="924.43" r="3.3" fill="#6aaee0" stroke="#ffffff" stroke-width="2.1"/>
<circle cx="1064.92" cy="922.33" r="3.3" fill="#6aaee0" stroke="#ffffff" stroke-width="2.1"/>
<circle cx="1117.11" cy="916.46" r="3.3" fill="#6aaee0" stroke="#ffffff" stroke-width="2.1"/>
<circle cx="1169.30" cy="925.27" r="3.3" fill="#6aaee0" stroke="#ffffff" stroke-width="2.1"/>
<circle cx="1221.49" cy="927.78" r="3.3" fill="#6aaee0" stroke="#ffffff" stroke-width="2.1"/>
<circle cx="1273.68" cy="922.75" r="3.3" fill="#6aaee0" stroke="#ffffff" stroke-width="2.1"/>
<circle cx="1325.87" cy="926.10" r="3.3" fill="#6aaee0" stroke="#ffffff" stroke-width="2.1"/>
<circle cx="1378.06" cy="927.78" r="3.3" fill="#6aaee0" stroke="#ffffff" stroke-width="2.1"/>
<circle cx="1430.25" cy="924.85" r="3.3" fill="#6aaee0" stroke="#ffffff" stroke-width="2.1"/>
<circle cx="1482.44" cy="923.59" r="3.3" fill="#6aaee0" stroke="#ffffff" stroke-width="2.1"/>
<circle cx="1534.63" cy="922.75" r="3.3" fill="#6aaee0" stroke="#ffffff" stroke-width="2.1"/>
<circle cx="1586.82" cy="925.27" r="3.3" fill="#6aaee0" stroke="#ffffff" stroke-width="2.1"/>
<circle cx="1639.01" cy="923.17" r="3.3" fill="#6aaee0" stroke="#ffffff" stroke-width="2.1"/>
<path d="M125.50,929.88 C142.90,930.09 160.29,930.30 177.69,930.30 C195.09,930.30 212.48,930.30 229.88,930.30 C247.28,930.30 264.67,930.30 282.07,930.30 C299.47,930.30 316.86,928.20 334.26,928.20 C351.66,928.20 369.05,928.69 386.45,929.04 C403.85,929.39 421.24,930.30 438.64,930.30 C456.04,930.30 473.43,929.46 490.83,929.46 C508.23,929.46 525.62,929.88 543.02,929.88 C560.42,929.88 577.81,929.88 595.21,929.88 C612.61,929.88 630.00,929.04 647.40,929.04 C664.80,929.04 682.19,930.30 699.59,930.30 C716.99,930.30 734.38,929.88 751.78,929.88 C769.18,929.88 786.57,929.88 803.97,929.88 C821.37,929.88 838.76,930.30 856.16,930.30 C873.56,930.30 890.95,930.30 908.35,930.30 C925.75,930.30 943.14,930.30 960.54,930.30 C977.94,930.30 995.33,930.30 1012.73,930.30 C1030.13,930.30 1047.52,930.30 1064.92,930.30 C1082.32,930.30 1099.71,926.52 1117.11,926.52 C1134.51,926.52 1151.90,930.30 1169.30,930.30 C1186.70,930.30 1204.09,929.88 1221.49,929.88 C1238.89,929.88 1256.28,930.30 1273.68,930.30 C1291.08,930.30 1308.47,930.30 1325.87,930.30 C1343.27,930.30 1360.66,930.30 1378.06,930.30 C1395.46,930.30 1412.85,930.30 1430.25,930.30 C1447.65,930.30 1465.04,930.30 1482.44,930.30 C1499.84,930.30 1517.23,930.30 1534.63,930.30 C1552.03,930.30 1569.42,930.30 1586.82,930.30 C1604.22,930.30 1621.61,930.30 1639.01,930.30 L1639.01,930.30 L125.50,930.30 Z" fill="rgba(169,184,232,0.12)"/>
<path d="M125.50,929.88 C142.90,930.09 160.29,930.30 177.69,930.30 C195.09,930.30 212.48,930.30 229.88,930.30 C247.28,930.30 264.67,930.30 282.07,930.30 C299.47,930.30 316.86,928.20 334.26,928.20 C351.66,928.20 369.05,928.69 386.45,929.04 C403.85,929.39 421.24,930.30 438.64,930.30 C456.04,930.30 473.43,929.46 490.83,929.46 C508.23,929.46 525.62,929.88 543.02,929.88 C560.42,929.88 577.81,929.88 595.21,929.88 C612.61,929.88 630.00,929.04 647.40,929.04 C664.80,929.04 682.19,930.30 699.59,930.30 C716.99,930.30 734.38,929.88 751.78,929.88 C769.18,929.88 786.57,929.88 803.97,929.88 C821.37,929.88 838.76,930.30 856.16,930.30 C873.56,930.30 890.95,930.30 908.35,930.30 C925.75,930.30 943.14,930.30 960.54,930.30 C977.94,930.30 995.33,930.30 1012.73,930.30 C1030.13,930.30 1047.52,930.30 1064.92,930.30 C1082.32,930.30 1099.71,926.52 1117.11,926.52 C1134.51,926.52 1151.90,930.30 1169.30,930.30 C1186.70,930.30 1204.09,929.88 1221.49,929.88 C1238.89,929.88 1256.28,930.30 1273.68,930.30 C1291.08,930.30 1308.47,930.30 1325.87,930.30 C1343.27,930.30 1360.66,930.30 1378.06,930.30 C1395.46,930.30 1412.85,930.30 1430.25,930.30 C1447.65,930.30 1465.04,930.30 1482.44,930.30 C1499.84,930.30 1517.23,930.30 1534.63,930.30 C1552.03,930.30 1569.42,930.30 1586.82,930.30 C1604.22,930.30 1621.61,930.30 1639.01,930.30" fill="none" stroke="#b4c2ee" stroke-width="1.6"/>
<circle cx="125.50" cy="929.88" r="3.3" fill="#d0d6f2" stroke="#ffffff" stroke-width="2.1"/>
<circle cx="177.69" cy="930.30" r="3.3" fill="#d0d6f2" stroke="#ffffff" stroke-width="2.1"/>
<circle cx="229.88" cy="930.30" r="3.3" fill="#d0d6f2" stroke="#ffffff" stroke-width="2.1"/>
<circle cx="282.07" cy="930.30" r="3.3" fill="#d0d6f2" stroke="#ffffff" stroke-width="2.1"/>
<circle cx="334.26" cy="928.20" r="3.3" fill="#d0d6f2" stroke="#ffffff" stroke-width="2.1"/>
<circle cx="386.45" cy="929.04" r="3.3" fill="#d0d6f2" stroke="#ffffff" stroke-width="2.1"/>
<circle cx="438.64" cy="930.30" r="3.3" fill="#d0d6f2" stroke="#ffffff" stroke-width="2.1"/>
<circle cx="490.83" cy="929.46" r="3.3" fill="#d0d6f2" stroke="#ffffff" stroke-width="2.1"/>
<circle cx="543.02" cy="929.88" r="3.3" fill="#d0d6f2" stroke="#ffffff" stroke-width="2.1"/>
<circle cx="595.21" cy="929.88" r="3.3" fill="#d0d6f2" stroke="#ffffff" stroke-width="2.1"/>
<circle cx="647.40" cy="929.04" r="3.3" fill="#d0d6f2" stroke="#ffffff" stroke-width="2.1"/>
<circle cx="699.59" cy="930.30" r="3.3" fill="#d0d6f2" stroke="#ffffff" stroke-width="2.1"/>
<circle cx="751.78" cy="929.88" r="3.3" fill="#d0d6f2" stroke="#ffffff" stroke-width="2.1"/>
<circle cx="803.97" cy="929.88" r="3.3" fill="#d0d6f2" stroke="#ffffff" stroke-width="2.1"/>
<circle cx="856.16" cy="930.30" r="3.3" fill="#d0d6f2" stroke="#ffffff" stroke-width="2.1"/>
<circle cx="908.35" cy="930.30" r="3.3" fill="#d0d6f2" stroke="#ffffff" stroke-width="2.1"/>
<circle cx="960.54" cy="930.30" r="3.3" fill="#d0d6f2" stroke="#ffffff" stroke-width="2.1"/>
<circle cx="1012.73" cy="930.30" r="3.3" fill="#d0d6f2" stroke="#ffffff" stroke-width="2.1"/>
<circle cx="1064.92" cy="930.30" r="3.3" fill="#d0d6f2" stroke="#ffffff" stroke-width="2.1"/>
<circle cx="1117.11" cy="926.52" r="3.3" fill="#d0d6f2" stroke="#ffffff" stroke-width="2.1"/>
<circle cx="1169.30" cy="930.30" r="3.3" fill="#d0d6f2" stroke="#ffffff" stroke-width="2.1"/>
<circle cx="1221.49" cy="929.88" r="3.3" fill="#d0d6f2" stroke="#ffffff" stroke-width="2.1"/>
<circle cx="1273.68" cy="930.30" r="3.3" fill="#d0d6f2" stroke="#ffffff" stroke-width="2.1"/>
<circle cx="1325.87" cy="930.30" r="3.3" fill="#d0d6f2" stroke="#ffffff" stroke-width="2.1"/>
<circle cx="1378.06" cy="930.30" r="3.3" fill="#d0d6f2" stroke="#ffffff" stroke-width="2.1"/>
<circle cx="1430.25" cy="930.30" r="3.3" fill="#d0d6f2" stroke="#ffffff" stroke-width="2.1"/>
<circle cx="1482.44" cy="930.30" r="3.3" fill="#d0d6f2" stroke="#ffffff" stroke-width="2.1"/>
<circle cx="1534.63" cy="930.30" r="3.3" fill="#d0d6f2" stroke="#ffffff" stroke-width="2.1"/>
<circle cx="1586.82" cy="930.30" r="3.3" fill="#d0d6f2" stroke="#ffffff" stroke-width="2.1"/>
<circle cx="1639.01" cy="930.30" r="3.3" fill="#d0d6f2" stroke="#ffffff" stroke-width="2.1"/>
<path d="M125.50,930.30 C142.90,930.30 160.29,930.30 177.69,930.30 C195.09,930.30 212.48,930.30 229.88,930.30 C247.28,930.30 264.67,930.30 282.07,930.30 C299.47,930.30 316.86,913.32 334.26,879.37 C351.66,845.42 369.05,675.83 386.45,675.83 C403.85,675.83 421.24,930.30 438.64,930.30 C456.04,930.30 473.43,928.62 490.83,928.62 C508.23,928.62 525.62,930.30 543.02,930.30 C560.42,930.30 577.81,930.30 595.21,930.30 C612.61,930.30 630.00,928.62 647.40,928.62 C664.80,928.62 682.19,930.30 699.59,930.30 C716.99,930.30 734.38,929.67 751.78,929.04 C769.18,928.41 786.57,926.52 803.97,926.52 C821.37,926.52 838.76,930.30 856.16,930.30 C873.56,930.30 890.95,930.30 908.35,930.30 C925.75,930.30 943.14,930.30 960.54,930.30 C977.94,930.30 995.33,930.30 1012.73,930.30 C1030.13,930.30 1047.52,930.30 1064.92,930.30 C1082.32,930.30 1099.71,929.46 1117.11,929.46 C1134.51,929.46 1151.90,929.74 1169.30,929.88 C1186.70,930.02 1204.09,930.30 1221.49,930.30 C1238.89,930.30 1256.28,930.30 1273.68,930.30 C1291.08,930.30 1308.47,930.30 1325.87,930.30 C1343.27,930.30 1360.66,930.30 1378.06,930.30 C1395.46,930.30 1412.85,930.30 1430.25,930.30 C1447.65,930.30 1465.04,930.09 1482.44,929.88 C1499.84,929.67 1517.23,929.32 1534.63,929.04 C1552.03,928.76 1569.42,928.20 1586.82,928.20 C1604.22,928.20 1621.61,929.04 1639.01,929.88 L1639.01,930.30 L125.50,930.30 Z" fill="rgba(130,90,240,0.26)"/>
<path d="M125.50,930.30 C142.90,930.30 160.29,930.30 177.69,930.30 C195.09,930.30 212.48,930.30 229.88,930.30 C247.28,930.30 264.67,930.30 282.07,930.30 C299.47,930.30 316.86,913.32 334.26,879.37 C351.66,845.42 369.05,675.83 386.45,675.83 C403.85,675.83 421.24,930.30 438.64,930.30 C456.04,930.30 473.43,928.62 490.83,928.62 C508.23,928.62 525.62,930.30 543.02,930.30 C560.42,930.30 577.81,930.30 595.21,930.30 C612.61,930.30 630.00,928.62 647.40,928.62 C664.80,928.62 682.19,930.30 699.59,930.30 C716.99,930.30 734.38,929.67 751.78,929.04 C769.18,928.41 786.57,926.52 803.97,926.52 C821.37,926.52 838.76,930.30 856.16,930.30 C873.56,930.30 890.95,930.30 908.35,930.30 C925.75,930.30 943.14,930.30 960.54,930.30 C977.94,930.30 995.33,930.30 1012.73,930.30 C1030.13,930.30 1047.52,930.30 1064.92,930.30 C1082.32,930.30 1099.71,929.46 1117.11,929.46 C1134.51,929.46 1151.90,929.74 1169.30,929.88 C1186.70,930.02 1204.09,930.30 1221.49,930.30 C1238.89,930.30 1256.28,930.30 1273.68,930.30 C1291.08,930.30 1308.47,930.30 1325.87,930.30 C1343.27,930.30 1360.66,930.30 1378.06,930.30 C1395.46,930.30 1412.85,930.30 1430.25,930.30 C1447.65,930.30 1465.04,930.09 1482.44,929.88 C1499.84,929.67 1517.23,929.32 1534.63,929.04 C1552.03,928.76 1569.42,928.20 1586.82,928.20 C1604.22,928.20 1621.61,929.04 1639.01,929.88" fill="none" stroke="#8b4cf2" stroke-width="2.4"/>
<circle cx="125.50" cy="930.30" r="3.3" fill="#8b4cf2" stroke="#ffffff" stroke-width="2.1"/>
<circle cx="177.69" cy="930.30" r="3.3" fill="#8b4cf2" stroke="#ffffff" stroke-width="2.1"/>
<circle cx="229.88" cy="930.30" r="3.3" fill="#8b4cf2" stroke="#ffffff" stroke-width="2.1"/>
<circle cx="282.07" cy="930.30" r="3.3" fill="#8b4cf2" stroke="#ffffff" stroke-width="2.1"/>
<circle cx="334.26" cy="879.37" r="3.3" fill="#8b4cf2" stroke="#ffffff" stroke-width="2.1"/>
<circle cx="386.45" cy="675.83" r="3.3" fill="#8b4cf2" stroke="#ffffff" stroke-width="2.1"/>
<circle cx="438.64" cy="930.30" r="3.3" fill="#8b4cf2" stroke="#ffffff" stroke-width="2.1"/>
<circle cx="490.83" cy="928.62" r="3.3" fill="#8b4cf2" stroke="#ffffff" stroke-width="2.1"/>
<circle cx="543.02" cy="930.30" r="3.3" fill="#8b4cf2" stroke="#ffffff" stroke-width="2.1"/>
<circle cx="595.21" cy="930.30" r="3.3" fill="#8b4cf2" stroke="#ffffff" stroke-width="2.1"/>
<circle cx="647.40" cy="928.62" r="3.3" fill="#8b4cf2" stroke="#ffffff" stroke-width="2.1"/>
<circle cx="699.59" cy="930.30" r="3.3" fill="#8b4cf2" stroke="#ffffff" stroke-width="2.1"/>
<circle cx="751.78" cy="929.04" r="3.3" fill="#8b4cf2" stroke="#ffffff" stroke-width="2.1"/>
<circle cx="803.97" cy="926.52" r="3.3" fill="#8b4cf2" stroke="#ffffff" stroke-width="2.1"/>
<circle cx="856.16" cy="930.30" r="3.3" fill="#8b4cf2" stroke="#ffffff" stroke-width="2.1"/>
<circle cx="908.35" cy="930.30" r="3.3" fill="#8b4cf2" stroke="#ffffff" stroke-width="2.1"/>
<circle cx="960.54" cy="930.30" r="3.3" fill="#8b4cf2" stroke="#ffffff" stroke-width="2.1"/>
<circle cx="1012.73" cy="930.30" r="3.3" fill="#8b4cf2" stroke="#ffffff" stroke-width="2.1"/>
<circle cx="1064.92" cy="930.30" r="3.3" fill="#8b4cf2" stroke="#ffffff" stroke-width="2.1"/>
<circle cx="1117.11" cy="929.46" r="3.3" fill="#8b4cf2" stroke="#ffffff" stroke-width="2.1"/>
<circle cx="1169.30" cy="929.88" r="3.3" fill="#8b4cf2" stroke="#ffffff" stroke-width="2.1"/>
<circle cx="1221.49" cy="930.30" r="3.3" fill="#8b4cf2" stroke="#ffffff" stroke-width="2.1"/>
<circle cx="1273.68" cy="930.30" r="3.3" fill="#8b4cf2" stroke="#ffffff" stroke-width="2.1"/>
<circle cx="1325.87" cy="930.30" r="3.3" fill="#8b4cf2" stroke="#ffffff" stroke-width="2.1"/>
<circle cx="1378.06" cy="930.30" r="3.3" fill="#8b4cf2" stroke="#ffffff" stroke-width="2.1"/>
<circle cx="1430.25" cy="930.30" r="3.3" fill="#8b4cf2" stroke="#ffffff" stroke-width="2.1"/>
<circle cx="1482.44" cy="929.88" r="3.3" fill="#8b4cf2" stroke="#ffffff" stroke-width="2.1"/>
<circle cx="1534.63" cy="929.04" r="3.3" fill="#8b4cf2" stroke="#ffffff" stroke-width="2.1"/>
<circle cx="1586.82" cy="928.20" r="3.3" fill="#8b4cf2" stroke="#ffffff" stroke-width="2.1"/>
<circle cx="1639.01" cy="929.88" r="3.3" fill="#8b4cf2" stroke="#ffffff" stroke-width="2.1"/>
<line x1="109.4" y1="930.2" x2="1655.3" y2="930.2" stroke="#aeaae6" stroke-width="1.5"/>
</g>
</svg>
</div></body></html>
